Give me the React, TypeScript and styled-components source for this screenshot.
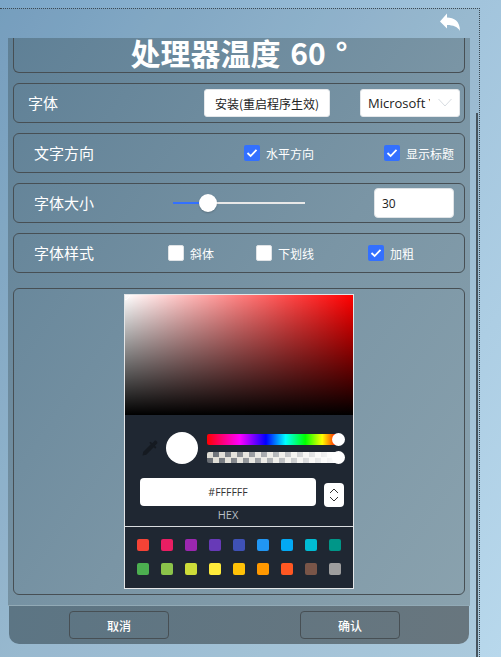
import React from "react";
import styled, { createGlobalStyle } from "styled-components";

const Global = createGlobalStyle`
  html, body { margin: 0; padding: 0; height: 100%; overflow: hidden; }
  body {
    background: linear-gradient(125deg, #7ba6c8 0%, #a2c4dc 50%, #b8d8ec 100%);
    font-family: "Noto Sans CJK SC", "Liberation Sans", sans-serif;
  }
`;

const Frame = styled.div`
  position: relative;
  box-sizing: border-box;
  width: 480px;
  height: 649px;
  margin-top: 8px;
  border-top: 1px dotted #3c4a55;
  border-right: 1px dotted #3c4a55;
  padding: 29px 0 0 8px;
  background: rgba(70, 90, 100, 0.1);
`;

const BackIcon = styled.svg`
  position: absolute;
  top: 4px;
  left: 439px;
  width: 22px;
  height: 19px;
`;

const ScrollThumb = styled.div`
  position: absolute;
  top: 104px;
  left: 476px;
  bottom: 0;
  width: 2px;
  background: #46545e;
`;

const Panel = styled.div`
  width: 462px;
  height: 606px;
  display: flex;
  flex-direction: column;
`;

const Body = styled.div`
  box-sizing: border-box;
  height: 568px;
  flex: none;
  padding: 0 5px;
  display: flex;
  flex-direction: column;
  border-bottom: 1px solid #92aab6;
  background: linear-gradient(125deg, #5f8096 0%, #7a95a5 55%, #8aa2ae 100%);
`;

const Card = styled.div`
  box-sizing: border-box;
  border: 1px solid #474f54;
  border-radius: 6px;
  color: #fff;
  display: flex;
  align-items: center;
  height: 40px;
  margin-top: 10px;
  flex: none;
`;

const TitleCard = styled(Card)`
  height: 35px;
  margin-top: 0;
  border-top: none;
  border-radius: 0 0 6px 6px;
  justify-content: center;
  align-items: flex-start;
  font-size: 30px;
  line-height: 29px;
  font-weight: 700;
  word-spacing: 3px;
  white-space: nowrap;
`;

const PickerCard = styled(Card)`
  height: 307px;
  margin-top: 15px;
  justify-content: center;
  align-items: flex-start;
  padding-top: 5px;
`;

const Label = styled.div<{ $w: number; $pl: number }>`
  box-sizing: border-box;
  width: ${(p) => p.$w}px;
  padding: 0 0 2px ${(p) => p.$pl}px;
  font-size: 15px;
  flex: none;
`;

const WhiteButton = styled.button`
  box-sizing: border-box;
  width: 126px;
  height: 28px;
  flex: none;
  border: 1px solid #e4e7ea;
  border-radius: 3px;
  background: #fff;
  color: #222;
  font: 12px "Noto Sans CJK SC", sans-serif;
  padding: 0;
  white-space: nowrap;
`;

const Select = styled.div`
  box-sizing: border-box;
  width: 100px;
  height: 28px;
  flex: none;
  margin-left: 30px;
  border: 1px solid #e4e7ea;
  border-radius: 3px;
  background: #fff;
  color: #222;
  font: 13px "Open Sans", sans-serif;
  display: flex;
  align-items: center;
  padding-left: 7px;
`;

const SelectText = styled.span`
  width: 62px;
  overflow: hidden;
  white-space: nowrap;
  flex: none;
`;

const SelectCaret = styled.svg`
  width: 16px;
  height: 10px;
  margin-left: 7px;
  flex: none;
`;

const CheckItem = styled.label<{ $ml: number }>`
  display: flex;
  align-items: center;
  gap: 6px;
  margin-left: ${(p) => p.$ml}px;
  font-size: 12px;
  color: #fff;
`;

const Box = styled.span<{ $on?: boolean }>`
  width: 16px;
  height: 16px;
  border-radius: 2px;
  background: ${(p) => (p.$on ? "#3370ff" : "#fff")};
  border: ${(p) => (p.$on ? "none" : "1px solid #dfe3e6")};
  box-sizing: border-box;
  display: flex;
  align-items: center;
  justify-content: center;
`;

const Slider = styled.div`
  position: relative;
  width: 132px;
  height: 2px;
  margin-left: 49px;
  background: #e8e8e8;
`;

const SliderFill = styled.div`
  position: absolute;
  left: 0;
  top: 0;
  height: 2px;
  background: #3370ff;
`;

const SliderThumb = styled.div`
  position: absolute;
  top: -8px;
  width: 18px;
  height: 18px;
  border-radius: 50%;
  background: #fff;
  box-shadow: 0 1px 2px rgba(0, 0, 0, 0.2);
`;

const NumberInput = styled.div`
  box-sizing: border-box;
  width: 80px;
  height: 30px;
  margin-left: 69px;
  border: 1px solid #dfe3e6;
  border-radius: 4px;
  background: #fff;
  color: #222;
  font: 12px "Open Sans", sans-serif;
  display: flex;
  align-items: center;
  padding-left: 7px;
`;

const Picker = styled.div`
  box-sizing: border-box;
  width: 230px;
  height: 295px;
  border: 1px solid #e3e6e8;
  background: #1f2732;
  display: flex;
  flex-direction: column;
`;

const Saturation = styled.div`
  position: relative;
  overflow: hidden;
  height: 120px;
  flex: none;
  background: linear-gradient(to top, #000, rgba(0, 0, 0, 0)),
    linear-gradient(to right, #fff, rgba(255, 255, 255, 0)), #f00;
`;

const SatCursor = styled.div`
  position: absolute;
  left: -5px;
  top: -5px;
  width: 8px;
  height: 8px;
  border: 1px solid #fff;
  border-radius: 50%;
`;

const Controls = styled.div`
  height: 112px;
  flex: none;
  position: relative;
  padding: 17px 0 0 14px;
  box-sizing: border-box;
  border-bottom: 1px solid #d8dcdf;
`;

const SliderRow = styled.div`
  display: flex;
  align-items: center;
`;

const Dropper = styled.svg`
  width: 18px;
  height: 18px;
  margin-left: 2px;
  flex: none;
`;

const Preview = styled.div`
  width: 32px;
  height: 32px;
  border-radius: 50%;
  background: #fff;
  margin-left: 7px;
  flex: none;
`;

const Bars = styled.div`
  margin-left: 9px;
  width: 131px;
  flex: none;
  display: flex;
  flex-direction: column;
  gap: 7px;
`;

const Bar = styled.div`
  position: relative;
  height: 11px;
  border-radius: 2px;
`;

const HueBar = styled(Bar)`
  background: linear-gradient(
    to right,
    #f00 0%,
    #f0f 25%,
    #00f 45%,
    #0ff 60%,
    #0f0 75%,
    #ff0 88%,
    #f00 100%
  );
`;

const AlphaBar = styled(Bar)`
  background: linear-gradient(to right, rgba(255, 255, 255, 0.08), #fff),
    repeating-conic-gradient(#5a5f66 0% 25%, #dcd9d0 0% 50%) 0 0 / 12px 11px;
`;

const BarThumb = styled.div`
  position: absolute;
  right: -7px;
  top: -1px;
  width: 13px;
  height: 13px;
  border-radius: 50%;
  background: #fff;
`;

const HexRow = styled.div`
  display: flex;
  align-items: flex-start;
  margin: 14px 0 0 1px;
`;

const HexInput = styled.div`
  box-sizing: border-box;
  width: 176px;
  height: 28px;
  flex: none;
  border-radius: 4px;
  background: #fff;
  color: #333;
  font: 10.5px "Open Sans", sans-serif;
  display: flex;
  align-items: center;
  justify-content: center;
`;

const Toggle = styled.div`
  width: 20px;
  height: 24px;
  flex: none;
  margin: 5px 0 0 8px;
  border-radius: 4px;
  background: #fff;
  display: flex;
  align-items: center;
  justify-content: center;
`;

const HexLabel = styled.div`
  width: 176px;
  margin: 2px 0 0 1px;
  text-align: center;
  color: #b9bfc5;
  font: 11px/12px "Open Sans", sans-serif;
`;

const Swatches = styled.div`
  display: grid;
  grid-template-columns: repeat(9, 12px);
  column-gap: 12px;
  row-gap: 12px;
  padding: 12px 0 0 12px;
`;

const Swatch = styled.div<{ $c: string }>`
  height: 12px;
  border-radius: 2px;
  background: ${(p) => p.$c};
`;

const Footer = styled.div`
  flex: 1;
  margin: 0 1px;
  border-radius: 0 0 10px 10px;
  display: flex;
  align-items: flex-start;
  padding: 5px 0 0 60px;
  background: linear-gradient(100deg, #5c7584 0%, #68767e 100%);
`;

const FootButton = styled.button<{ $ml?: number }>`
  box-sizing: border-box;
  width: 100px;
  height: 28px;
  margin-left: ${(p) => p.$ml ?? 0}px;
  background: transparent;
  border: 1px solid #474f54;
  border-radius: 4px;
  color: #fff;
  font: 500 12px "Noto Sans CJK SC", sans-serif;
  padding: 0;
`;

const Tick = () => (
  <svg width="12" height="10" viewBox="0 0 12 10">
    <path d="M1.5 5 L4.6 8 L10.5 1.8" fill="none" stroke="#fff" strokeWidth="1.8" />
  </svg>
);

const Check = ({ on, text, ml }: { on?: boolean; text: string; ml: number }) => (
  <CheckItem $ml={ml}>
    <Box $on={on}>{on && <Tick />}</Box>
    {text}
  </CheckItem>
);

const colors = [
  "#f44336", "#e91e63", "#9c27b0", "#673ab7", "#3f51b5", "#2196f3", "#03a9f4", "#00bcd4", "#009688",
  "#4caf50", "#8bc34a", "#cddc39", "#ffeb3b", "#ffc107", "#ff9800", "#ff5722", "#795548", "#9e9e9e",
];

export default function App() {
  return (
    <>
      <Global />
      <Frame>
        <BackIcon viewBox="0 0 22 19">
          <path d="M1 8.5 L8 0.5 L8 4.5 C15 4.5 21 8 21 18 C19 14 14 12 8 12 L8 15.5 Z" fill="#fff" />
        </BackIcon>
        <ScrollThumb />
        <Panel>
          <Body>
            <TitleCard>处理器温度 60 °</TitleCard>
            <Card>
              <Label $w={190} $pl={14}>字体</Label>
              <WhiteButton>安装(重启程序生效)</WhiteButton>
              <Select>
                <SelectText>Microsoft YaHei</SelectText>
                <SelectCaret viewBox="0 0 16 10">
                  <path d="M1.5 1 L8 8 L14.5 1" fill="none" stroke="#d8dde2" strokeWidth="1" />
                </SelectCaret>
              </Select>
            </Card>
            <Card>
              <Label $w={110} $pl={20}>文字方向</Label>
              <Check on text="水平方向" ml={120} />
              <Check on text="显示标题" ml={70} />
            </Card>
            <Card>
              <Label $w={110} $pl={20}>字体大小</Label>
              <Slider>
                <SliderFill style={{ width: 28 }} />
                <SliderThumb style={{ left: 26 }} />
              </Slider>
              <NumberInput>30</NumberInput>
            </Card>
            <Card>
              <Label $w={110} $pl={20}>字体样式</Label>
              <Check text="斜体" ml={44} />
              <Check text="下划线" ml={42} />
              <Check on text="加粗" ml={54} />
            </Card>
            <PickerCard>
              <Picker>
                <Saturation>
                  <SatCursor />
                </Saturation>
                <Controls>
                  <SliderRow>
                    <Dropper viewBox="0 0 24 24">
                      <path d="M2 22 L3 17 L13 7 L11 5 L13 3.5 L15 5.5 L18 2.5 C19.5 1 23 4.5 21.5 6 L18.5 9 L20.5 11 L19 13 L17 11 L7 21 Z" fill="#151a21" />
                    </Dropper>
                    <Preview />
                    <Bars>
                      <HueBar><BarThumb /></HueBar>
                      <AlphaBar><BarThumb /></AlphaBar>
                    </Bars>
                  </SliderRow>
                  <HexRow>
                    <HexInput>#FFFFFF</HexInput>
                    <Toggle>
                      <svg width="10" height="16" viewBox="0 0 10 16">
                        <path d="M1 6 L5 2 L9 6 M1 10 L5 14 L9 10" fill="none" stroke="#333" strokeWidth="1" />
                      </svg>
                    </Toggle>
                  </HexRow>
                  <HexLabel>HEX</HexLabel>
                </Controls>
                <Swatches>
                  {colors.map((c) => (
                    <Swatch key={c} $c={c} />
                  ))}
                </Swatches>
              </Picker>
            </PickerCard>
          </Body>
          <Footer>
            <FootButton>取消</FootButton>
            <FootButton $ml={131}>确认</FootButton>
          </Footer>
        </Panel>
      </Frame>
    </>
  );
}
